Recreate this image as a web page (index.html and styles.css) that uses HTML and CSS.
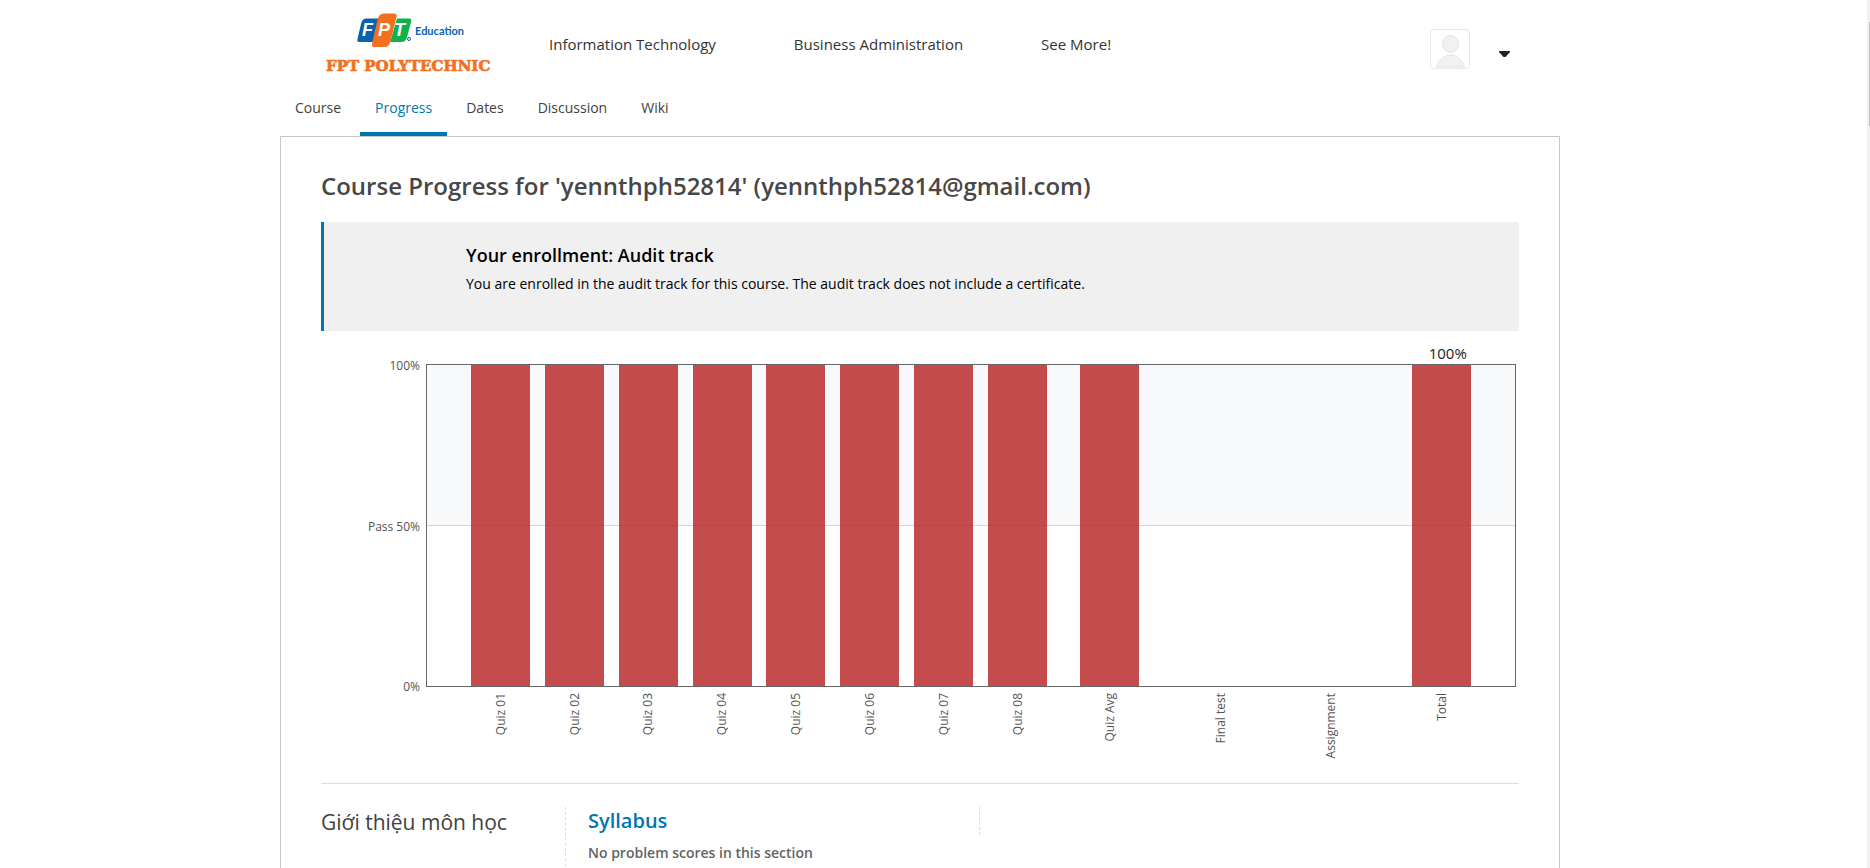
FILE: index.html
```html
<!DOCTYPE html>
<html lang="en">
<head>
<meta charset="utf-8">
<title>Progress</title>
<link rel="stylesheet" href="styles.css">
</head>
<body>
<div class="page">
  <header class="site-header">
    <a class="logo" href="#" aria-label="FPT Polytechnic">
      <svg width="172" height="64" viewBox="0 0 172 64" aria-hidden="true">
        <g transform="translate(2 0)">
        <path d="M39 7.500h13.500q3 0 2.200 3l-4.500 16.500q-1 4-5 4h-13q-2.500 0-1.700-3l3.500-15q1.200-5.500 5-5.500z" fill="#0a62ae"/>
        <path d="M70 7.500h12q3 0 2.200 3l-4 15q-1.300 5.500-6 5.500h-11z" fill="#0fb14b"/>
        <path d="M57 2.500h10q3.500 0 2.500 3.500l-6 24.500q-1.300 5.500-6.500 5.500h-9.500q-3.300 0-2.500-3.300l5.500-24q1.500-6.200 6.500-6.200z" fill="#f37021"/>
        <g class="logo-letters"><text x="35" y="25">F</text><text x="51" y="25">P</text><text x="67" y="25">T</text></g>
        <circle cx="82" cy="28" r="1.500" fill="#fff" stroke="#0a62ae"/>
        </g>
        <text class="logo-edu" x="90" y="24">Education</text>
        <text class="logo-name" x="1" y="60">FPT POLYTECHNIC</text>
      </svg>
    </a>
    <nav class="main-nav">
      <a href="#">Information Technology</a>
      <a href="#">Business Administration</a>
      <a href="#">See More!</a>
    </nav>
    <div class="user">
      <a class="avatar" href="#" aria-label="Profile">
        <svg width="38" height="38" viewBox="0 0 38 38" fill="#f1f1f1" stroke="#e4e4e4">
          <ellipse cx="19.500" cy="14" rx="8" ry="8.500"/>
          <path d="M5.500 37c1.500-6 7-12 14-12s12.500 6 14 12z"/>
        </svg>
      </a>
      <button class="caret" type="button" aria-label="Options menu">
        <svg width="12" height="6" viewBox="0 0 12 6"><path d="M0 0h11v1l-4.500 5h-2l-4.500-5z" fill="#222"/></svg>
      </button>
    </div>
  </header>
  <nav class="tabs">
    <a href="#">Course</a>
    <a class="active" href="#" aria-current="page">Progress</a>
    <a href="#">Dates</a>
    <a href="#">Discussion</a>
    <a href="#">Wiki</a>
  </nav>
  <main class="card">
    <h1>Course Progress for 'yennthph52814' (yennthph52814@gmail.com)</h1>
    <section class="notice">
      <h2>Your enrollment: Audit track</h2>
      <p>You are enrolled in the audit track for this course. The audit track does not include a certificate.</p>
    </section>
    <section class="chart" aria-label="Grades">
      <div class="y-axis"><span>100%</span><span>Pass 50%</span><span>0%</span></div>
      <div class="plot">
        <i class="bar"></i><i class="bar"></i><i class="bar"></i><i class="bar"></i><i class="bar"></i><i class="bar"></i><i class="bar"></i><i class="bar"></i><i class="bar"></i><i></i><i></i><i class="bar"><b class="total">100%</b></i>
      </div>
      <div class="x-axis">
        <span>Quiz 01</span><span>Quiz 02</span><span>Quiz 03</span><span>Quiz 04</span><span>Quiz 05</span><span>Quiz 06</span><span>Quiz 07</span><span>Quiz 08</span><span>Quiz Avg</span><span>Final test</span><span>Assignment</span><span>Total</span>
      </div>
    </section>
    <section class="chapter">
      <h2>Giới thiệu môn học</h2>
      <div class="lessons">
        <div class="lesson">
          <h3><a href="#">Syllabus</a></h3>
          <p>No problem scores in this section</p>
        </div>
        <div class="scores"></div>
      </div>
    </section>
  </main>
</div>
<div class="scroll-track" aria-hidden="true"><div class="scroll-thumb"></div></div>
</body>
</html>
```
FILE: styles.css
```css
* { box-sizing: border-box; }
body {
  margin: 0;
  background: #fff;
  color: #414141;
  font-family: "Open Sans", "Noto Sans", sans-serif;
  font-size: 14px;
  line-height: 20px;
}
h1, h2, h3, p { margin: 0; }
a { color: inherit; text-decoration: none; }

.page {
  display: flex;
  flex-direction: column;
  height: 100vh;
  padding: 0 310px 0 280px;
  overflow: hidden;
}

.site-header {
  display: flex;
  flex: none;
  align-items: flex-start;
  height: 88px;
  padding: 11px 49px 0 45px;
}
.logo svg { display: block; }
.logo-letters {
  fill: #fff;
  font: italic bold 18px "Liberation Sans", sans-serif;
}
.logo-edu {
  fill: #0a62ae;
  font: bold 11px Lato, sans-serif;
}
.logo-name {
  fill: #f37021;
  stroke: #f37021;
  stroke-width: .7px;
  font: bold 15px "DejaVu Serif", serif;
}
.main-nav {
  display: flex;
  flex: 1;
  gap: 78px;
  padding: 23px 0 0 52px;
  color: #333;
  font-size: 15px;
}
.user {
  display: flex;
  align-items: center;
  gap: 29px;
  padding-top: 18px;
}
.avatar {
  width: 40px;
  height: 40px;
  border: 1px solid #e7e7e7;
  border-radius: 4px;
}
.avatar svg { display: block; }
.caret {
  padding: 10px 0 0;
  border: 0;
  background: none;
  line-height: 0;
}

.tabs {
  display: flex;
  flex: none;
  gap: 4px;
  height: 48px;
}
.tabs a {
  padding: 10px 15px 0;
  border-bottom: 4px solid transparent;
}
.tabs .active {
  border-color: #0075b4;
  color: #0075b4;
}

.card {
  flex: 1;
  padding: 31px 40px 0;
  border: 1px solid #c8c8c8;
  border-bottom: 0;
}
h1 {
  color: #474747;
  font-size: 24px;
  font-weight: 600;
  line-height: 36px;
}
.notice {
  height: 109px;
  margin-top: 18px;
  padding: 19px 20px 20px 142px;
  border-left: 3px solid #0075b4;
  background: #f0f0f0;
  color: #000;
}
.notice h2 {
  font-size: 18px;
  font-weight: 600;
  line-height: 28px;
}
.notice p { margin-top: 5px; }

.chart {
  display: grid;
  grid-template-columns: 99px 1fr;
  grid-template-rows: 323px 96px;
  column-gap: 6px;
  margin-top: 33px;
  padding-right: 3px;
  border-bottom: 1px solid #ddd;
  color: #545454;
  font-size: 12px;
}
.y-axis {
  display: flex;
  flex-direction: column;
  justify-content: space-between;
  margin: -8px 0 -10px;
  text-align: right;
}
.plot, .x-axis {
  display: grid;
  grid-template-columns: 12fr repeat(7, 16fr 4fr) 16fr 9fr repeat(3, 16fr 14fr) 16fr 12fr;
}
.plot {
  border: 1px solid #666;
  background: linear-gradient(#f7f9fb 0 160px, #d3d5d6 160px 161px, #fff 161px);
}
.bar {
  position: relative;
  background: rgba(182, 31, 31, .8);
}
.total {
  position: absolute;
  bottom: 100%;
  left: 17px;
  color: #222;
  font: 15px/24px "Open Sans", sans-serif;
}
.plot > :nth-child(1), .x-axis > :nth-child(1) { grid-column: 2; }
.plot > :nth-child(2), .x-axis > :nth-child(2) { grid-column: 4; }
.plot > :nth-child(3), .x-axis > :nth-child(3) { grid-column: 6; }
.plot > :nth-child(4), .x-axis > :nth-child(4) { grid-column: 8; }
.plot > :nth-child(5), .x-axis > :nth-child(5) { grid-column: 10; }
.plot > :nth-child(6), .x-axis > :nth-child(6) { grid-column: 12; }
.plot > :nth-child(7), .x-axis > :nth-child(7) { grid-column: 14; }
.plot > :nth-child(8), .x-axis > :nth-child(8) { grid-column: 16; }
.plot > :nth-child(9), .x-axis > :nth-child(9) { grid-column: 18; }
.plot > :nth-child(10), .x-axis > :nth-child(10) { grid-column: 20; }
.plot > :nth-child(11), .x-axis > :nth-child(11) { grid-column: 22; }
.plot > :nth-child(12), .x-axis > :nth-child(12) { grid-column: 24; }
.x-axis {
  grid-column: 2;
  padding: 6px 0 0 1px;
}
.x-axis span {
  justify-self: center;
  align-self: start;
  writing-mode: vertical-rl;
  transform: rotate(180deg);
}

.chapter {
  display: grid;
  grid-template-columns: 244px 1fr;
  margin-top: 23px;
}
.chapter h2 {
  font-size: 21px;
  font-weight: 400;
  line-height: 30px;
}
.lessons {
  display: grid;
  grid-template-columns: 391px 1fr;
  min-height: 90px;
  padding-left: 22px;
  border-left: 1px dashed #ddd;
}
.lesson h3 {
  color: #0075b4;
  font-size: 20px;
  font-weight: 600;
  line-height: 28px;
}
.lesson p {
  margin-top: 8px;
  color: #646464;
  font-weight: 600;
}
.scores {
  height: 28px;
  border-left: 1px dashed #ddd;
}

.scroll-track {
  position: fixed;
  top: 0;
  right: 0;
  bottom: 0;
  width: 3px;
  padding: 22px 0 0 2px;
  background: #f1f1f1;
}
.scroll-thumb {
  height: 104px;
  background: #c1c1c1;
}
```
